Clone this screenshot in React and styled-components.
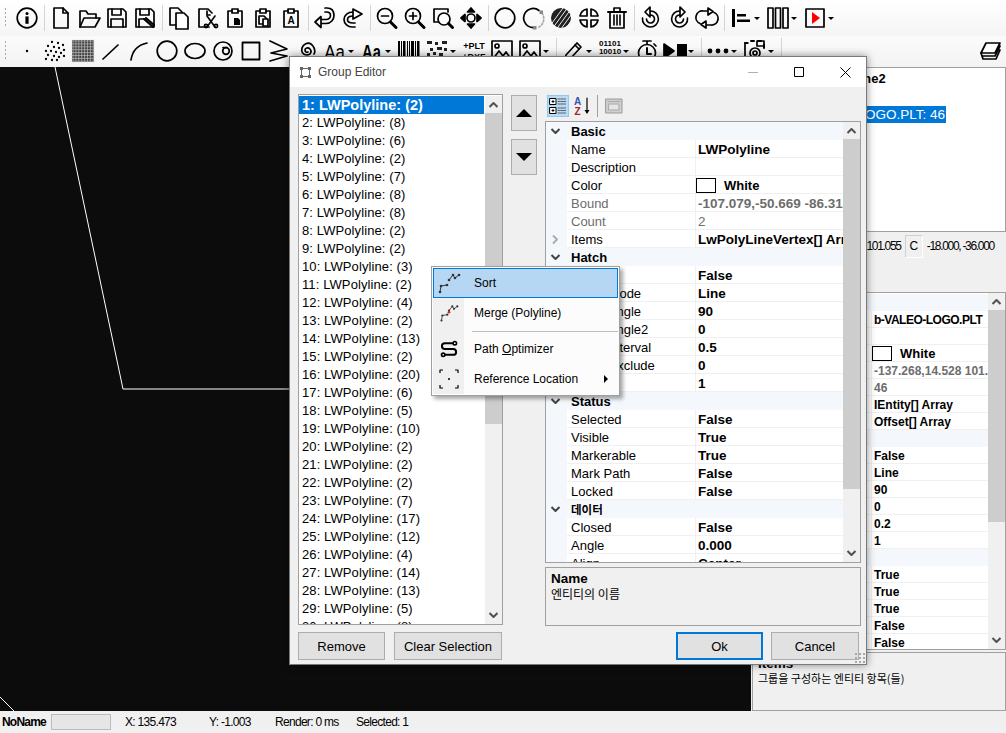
import React from "react";
import styled, { createGlobalStyle } from "styled-components";

const Global = createGlobalStyle`
  html, body { margin: 0; padding: 0; background: #f0f0f0; overflow: hidden; }
  body { font-family: "Liberation Sans", Arial, "Noto Sans CJK KR", sans-serif; font-size: 12px; color: #000; }
  * { box-sizing: border-box; }
`;

const Page = styled.div`
  position: relative; width: 1006px; height: 733px; display: flex; flex-direction: column; overflow: hidden; background: #f0f0f0;
`;
const Toolbar = styled.div`
  display: flex; align-items: center; flex: none; height: ${p => p.$h}px; padding-bottom: ${p => p.$pb || 0}px;
  background: linear-gradient(${p => p.$from}, ${p => p.$to});
`;
const Grip = styled.div`
  width: 13px; height: 20px; flex: none;
  background: radial-gradient(circle at 5.5px 1px, #a8a8a8 1px, transparent 1.1px) 0 0 / 13px 4px repeat-y;
`;
const Tool = styled.div`
  flex: none; width: ${p => (p.$drop ? 37 : 28)}px; height: 28px; display: flex; align-items: center; position: relative; padding-left: 2px;
`;
const Caret = styled.span`
  position: absolute; left: 27px; top: 13px; width: 0; height: 0;
  border-left: 3px solid transparent; border-right: 3px solid transparent; border-top: 3px solid #000;
`;
const Sep = styled.div`
  width: 6px; flex: none; height: 26px; display: flex; justify-content: center;
  &::before { content: ""; width: 1px; background: #d4d4d4; }
`;
const Spacer = styled.div`flex: 1;`;
const LayersWrap = styled.div`width: 28px; height: 26px; flex: none; display: flex; align-items: center;`;
const Glyph = styled.svg`
  display: block; flex: none; fill: none; stroke: #000; stroke-width: 1.7; stroke-linecap: round; stroke-linejoin: round;
  text { font-family: "Liberation Sans", Arial, sans-serif; stroke: none; fill: #000; }
`;

const Main = styled.div`display: flex; flex: 1; min-height: 0;`;
const Canvas = styled.div`flex: none; width: 751px; background: #0c0c0c;`;
const CanvasArt = styled.svg`display: block; width: 100%; height: 100%;`;
const Right = styled.div`flex: none; width: 255px; min-width: 0; display: flex; flex-direction: column; padding-left: 1px;`;
const TopPanel = styled.div`
  height: 165px; flex: none; background: #fff; border: 1px solid #a0a0a0; padding: 2px 0 0 90px; overflow: hidden;
`;
const TopTitle = styled.div`font-weight: bold; font-size: 13px; height: 18px; line-height: 18px; white-space: nowrap;`;
const TopSel = styled.div`
  margin-top: 18px; margin-left: -32px; display: inline-block; height: 17px; line-height: 17px; font-size: 13.5px; padding: 0 1px;
  background: #0078d7; color: #fff; white-space: nowrap; width: 135px; text-align: right;
`;
const CoordRow = styled.div`
  flex: none; height: 60px; display: flex; align-items: flex-start; padding: 3px 12px 0 0; justify-content: flex-end; gap: 4px;
`;
const CoordText = styled.span`line-height: 23px; letter-spacing: -1.3px; white-space: nowrap;`;
const CoordBtn = styled.span`
  width: 18px; height: 23px; flex: none; border: 1px solid #cfcfcf; border-right-color: #fff; border-bottom-color: #fff; text-align: center; line-height: 21px; font-size: 12px;
`;

const GridBox = styled.div`
  display: flex; flex: none; height: ${p => p.$h}px; background: #fff; border: 1px solid #a0a0a0; overflow: hidden;
`;
const Rows = styled.div`flex: 1; min-width: 0; overflow: hidden; padding-top: ${p => p.$pt || 0}px;`;
const CatRow = styled.div`
  display: flex; align-items: center; height: ${p => p.$r}px; background: #f4f7fc; font-weight: bold; font-size: 13px; white-space: nowrap;
`;
const CatName = styled.span`margin-left: 4px; font-size: ${p => (p.$ko ? 11.5 : 13)}px;`;
const Gutter = styled.span`
  width: ${p => p.$w}px; flex: none; display: flex; justify-content: center; align-items: center; height: 100%; background: #f4f7fc; padding-right: 3px;
`;
const PropRow = styled.div`display: flex; height: ${p => p.$r}px; line-height: ${p => p.$r + 1}px; white-space: nowrap;`;
const PropName = styled.span`
  width: ${p => p.$w}px; flex: none; overflow: hidden; border-bottom: 1px solid #f0f0f0; font-size: 13px; padding-left: 4px; color: ${p => (p.$dim ? "#6d6d6d" : "#000")};
`;
const PropValue = styled.span`
  flex: 1; min-width: 0; display: flex; align-items: center; overflow: hidden; border-bottom: 1px solid #f0f0f0; border-left: 1px solid #f0f0f0;
  padding: 2px 0 0 2px; font-weight: ${p => (p.$light ? "normal" : "bold")}; font-size: ${p => p.$fs}px; letter-spacing: ${p => (p.$tight ? -0.5 : 0)}px; color: ${p => (p.$dim ? "#6d6d6d" : "#000")};
`;
const Swatch = styled.i`
  width: 20px; height: 15px; flex: none; border: 1px solid #000; background: #fff; margin: -1px 8px 0 -2px;
`;
const ColorName = styled.span`font-size: 13px;`;

const Scroll = styled.div`width: 17px; flex: none; display: flex; flex-direction: column; background: #f0f0f0; align-self: stretch;`;
const ScrollArrow = styled.div`height: 17px; flex: none; display: flex; align-items: center; justify-content: center;`;
const Thumb = styled.div`flex: none; height: ${p => p.$h}px; background: #cdcdcd;`;
const ScrollRest = styled.div`flex: 1;`;

const HelpBox = styled.div`
  flex: none; height: 59px; margin-top: ${p => p.$mt || 0}px; border: 1px solid #a0a0a0; background: #f0f0f0; padding: 3px 0 0 5px; overflow: hidden;
`;
const HelpTitle = styled.div`font-weight: bold; font-size: 13.5px; line-height: 15px;`;
const HelpText = styled.div`font-size: ${p => p.$fs}px; line-height: 15px; font-family: "Noto Sans CJK KR", sans-serif;`;

const Status = styled.div`
  flex: none; height: 22px; display: flex; align-items: center; background: #f0f0f0; padding-left: 2px; letter-spacing: -0.7px; white-space: nowrap;
`;
const StatusName = styled.b`width: 49px; flex: none; letter-spacing: -0.8px;`;
const StatusBox = styled.span`width: 60px; height: 16px; flex: none; background: #e6e6e6; border: 1px solid #bcbcbc;`;
const StatusCell = styled.span`flex: none; width: ${p => p.$w}px; padding-left: ${p => p.$pl || 0}px;`;

const Dialog = styled.div`
  position: absolute; left: 289px; top: 56px; width: 578px; height: 609px; display: flex; flex-direction: column;
  background: #f0f0f0; border: 1px solid #7a7a7a; box-shadow: 0 0 8px rgba(0,0,0,.45);
`;
const TitleBar = styled.div`
  flex: none; height: 30px; background: #fff; display: flex; align-items: center; padding-left: 9px; gap: 6px;
`;
const TitleText = styled.span`color: #444; flex: 1; font-size: 12px;`;
const WinBtn = styled.div`width: 46px; height: 30px; flex: none; padding-left: 4px; display: flex; align-items: center; justify-content: center;`;
const TitleControls = styled.div`display: flex;`;
const DialogBody = styled.div`flex: none; display: flex; gap: 8px; height: 545px; padding: 7px 0 0 8px;`;
const ListBox = styled.div`
  width: 205px; height: 531px; flex: none; display: flex; background: #fff; border: 1px solid #a0a0a0; padding: 1px 0 0; overflow: hidden;
`;
const List = styled.div`flex: 1; overflow: hidden; margin-right: 1px;`;
const ListItem = styled.div`
  height: 18px; line-height: 18px; padding-left: 3px; white-space: nowrap; font-size: 13px; letter-spacing: 0.1px;
  ${p => p.$sel ? "background:#0078d7;color:#fff;font-weight:bold;font-size:14.5px;letter-spacing:0;" : ""}
`;
const Arrows = styled.div`width: 26px; flex: none; display: flex; flex-direction: column; gap: 8px; padding-top: 1px;`;
const ArrowBtn = styled.div`
  height: 36px; background: #e1e1e1; border: 1px solid #adadad; display: flex; align-items: center; justify-content: center;
`;
const Tri = styled.span`
  width: 0; height: 0; border-left: 8px solid transparent; border-right: 8px solid transparent;
  ${p => (p.$down ? "border-top: 8px solid #000;" : "border-bottom: 8px solid #000;")}
`;
const RightCol = styled.div`width: 316px; flex: none; display: flex; flex-direction: column; padding-top: 1px;`;
const GridTools = styled.div`height: 26px; flex: none; display: flex; align-items: flex-start; padding-left: 2px;`;
const GridToolBtn = styled.div`
  width: 22px; height: 22px; flex: none; display: flex; align-items: center; justify-content: center; margin-right: 2px; border: 1px solid ${p => (p.$on ? "#90c8f0" : "transparent")};
  background: ${p => (p.$on ? "#b8daf5" : "transparent")};
`;
const GridToolSep = styled.div`width: 1px; height: 22px; background: #a0a0a0; margin: 0 5px 0 2px; flex: none;`;
const Footer = styled.div`flex: 1; display: flex; align-items: flex-start; padding: 0 0 0 8px;`;
const Btn = styled.div`
  width: ${p => p.$w}px; height: 28px; flex: none; margin-right: ${p => p.$mr || 0}px; margin-left: ${p => p.$ml || 0}px; background: #e1e1e1;
  border: ${p => (p.$def ? "2px solid #0078d7" : "1px solid #adadad")}; display: flex; align-items: center; justify-content: center; font-size: 13px;
`;
const ResizeGrip = styled.div`
  position: absolute; right: 1px; bottom: 1px; width: 10px; height: 10px;
  background: radial-gradient(circle at 1px 1px, #a8a8a8 1px, transparent 1.1px) 0 0 / 4px 4px;
`;

const Menu = styled.div`
  position: absolute; left: 431px; top: 266px; width: 189px; height: 130px; background: #fcfcfc; border: 1px solid #a0a0a0; padding: 1px;
  box-shadow: 3px 3px 4px rgba(0,0,0,.35);
`;
const MenuRow = styled.div`
  display: flex; align-items: center; height: 30px; position: relative;
  ${p => p.$hot ? "background:#b5d7f3;outline:1px solid #0078d7;outline-offset:-1px;" : ""}
`;
const MenuIcon = styled.span`
  width: 31px; height: 100%; flex: none; display: flex; align-items: center; justify-content: center;
  background: ${p => (p.$hot ? "transparent" : "#f0f0f0")};
`;
const MenuLabel = styled.span`margin-left: 10px; font-size: 12px;`;
const MenuSep = styled.div`
  height: 6px; display: flex; align-items: center;
  background: linear-gradient(to right, #f0f0f0 31px, transparent 31px);
  &::after { content: ""; margin-left: 39px; flex: 1; height: 1px; background: #bcbcbc; }
`;
const SubArrow = styled.span`
  position: absolute; right: 10px; top: 11px; width: 0; height: 0;
  border-top: 4px solid transparent; border-bottom: 4px solid transparent; border-left: 4px solid #000;
`;
const KeyU = styled.span`text-decoration: underline;`;

const I = ({ s = 24, w, h, vb, children }) => (
  <Glyph width={w || s} height={h || s} viewBox={vb || "0 0 24 24"}>{children}</Glyph>
);

const range = (n, f) => Array.from({ length: n }, (_, i) => f(i));
const clip = <><path d="M5 5h4M15 5h4v16H5V5" /><path d="M9 3h6v4H9z" /></>;

const icons = {
  info: <><circle cx="12" cy="12" r="9.8" /><circle cx="12" cy="7.6" r="1.5" fill="#000" stroke="none" /><rect x="10.4" y="10.4" width="3.2" height="7.4" fill="#000" stroke="none" /></>,
  new: <><path d="M5 2h9l5 5v15H5z" /><path d="M14 2v5h5" /></>,
  open: <><path d="M3 21V5h6l2 3h8v4" /><path d="M3 21l4-9h16l-5 9z" /></>,
  save: <><path d="M3 3h15l3 3v15H3z" /><path d="M7 3v6h9V3" /><path d="M6 21v-8h12v8" /></>,
  saveas: <><path d="M3 3h15l3 3v15H3z" /><path d="M7 3v6h9V3" /><path d="M6 21v-8h7" /><path d="M11 13l9 8M13 12l8 7" strokeWidth="2" /></>,
  copy: <><path d="M3 2h8l4 4v13H3z" /><path d="M9 7h8l4 4v12H9z" fill="#fff" /></>,
  cut: <><path d="M17 7l-4-4H4v18h10" /><path d="M12 5v4h3" /><path d="M12 10l8 11M20 10l-8 11" strokeWidth="1.6" /><circle cx="11" cy="20" r="1.6" /><circle cx="21" cy="20" r="1.6" /></>,
  paste: <>{clip}<path d="M11 12h4l2 2v5h-6z" fill="#000" stroke="none" /></>,
  paste2: <>{clip}<path d="M8 10h5l2 2v6H8z" /><path d="M12 13h5v7h-5z" fill="#fff" /></>,
  pasteA: <>{clip}<text x="12" y="18" fontSize="10" fontWeight="bold" textAnchor="middle">A</text></>,
  undo: <><path d="M12 2h2c5 0 7 3.5 7 7.5s-3 8-8 8H8" /><path d="M12 6h1.5c3 0 4 1.8 4 3.5s-1.5 4-4.5 4H8" /><path d="M8 10.5L2 16l6 5.5z" fill="#fff" /></>,
  redo: <><path d="M12 6c-5 0-9 3-9 7.5S7 21 11 21h3M12 10c-3 0-5.5 1-5.5 3.5S9 17 12 17h2" /><path d="M12 3l9 5-9 5z" fill="#fff" /></>,
  zoomOut: <><circle cx="10" cy="10" r="7.5" /><path d="M6.5 10h7" /><path d="M15.5 16l5.5 5.5" strokeWidth="3" /></>,
  zoomIn: <><circle cx="10" cy="10" r="7.5" /><path d="M6.5 10h7M10 6.5v7" /><path d="M15.5 16l5.5 5.5" strokeWidth="3" /></>,
  zoomFit: <><path d="M3 3h14v3M3 3v13h4" /><circle cx="13" cy="13" r="6" fill="#fff" /><path d="M17.5 17.5l4 4" strokeWidth="3" /></>,
  pan: <><circle cx="12" cy="12" r="4" /><path d="M12 2l3.5 4h-7zM12 22l3.5-4h-7zM2 12l4-3.5v7zM22 12l-4-3.5v7z" fill="#000" /></>,
  circle: <circle cx="12" cy="12" r="9.8" />,
  dashedCircle: <><path d="M18 4.5A9.5 9.5 0 1 0 13 21.5" /><path d="M18 21A9.5 9.5 0 0 0 21.5 8" stroke="#aaa" strokeDasharray="1.5 2" /><rect x="18.5" y="4.5" width="3.5" height="3.5" fill="#888" stroke="none" /><rect x="12" y="20" width="3.5" height="3.5" fill="#888" stroke="none" /></>,
  hatch: <><circle cx="12" cy="12" r="10" fill="#222" stroke="none" />{range(7, i => <path key={i} d={`M${-2 + i * 4.4} 24L${14 + i * 4.4} 2`} stroke="#fff" strokeWidth="0.9" />)}</>,
  split: <path d="M10 3a9 9 0 0 0-7 7h7zM14 3a9 9 0 0 1 7 7h-7zM10 21a9 9 0 0 1-7-7h7zM14 21a9 9 0 0 0 7-7h-7z" />,
  trash: <><path d="M3 6h18" strokeWidth="2" /><path d="M9 5V2h6v3" /><path d="M5 6v16h14V6" /><path d="M9 9v10M12 9v10M15 9v10" strokeWidth="1.6" /></>,
  rotL: <><path d="M11 5a8 8 0 1 1-7.5 7M11 9a4 4 0 1 1-3.5 4" strokeWidth="1.6" /><path d="M11 1L6 6l5 5z" fill="#fff" /></>,
  rotR: <><path d="M13 5a8 8 0 1 0 7.5 7M13 9a4 4 0 1 0 3.5 4" strokeWidth="1.6" /><path d="M13 1l5 5-5 5z" fill="#fff" /></>,
  swap: <><path d="M14 5H8a6.5 6.5 0 0 0-3 12.5M10 19h6a6.5 6.5 0 0 0 3-12.5" /><path d="M13 2l5 3.5L13 9zM11 15l-5 3.5 5 3.5z" fill="#fff" /></>,
  align: <><rect x="3" y="3" width="3" height="18" fill="#000" stroke="none" /><rect x="8" y="8" width="9" height="2.5" fill="#000" stroke="none" /><rect x="8" y="13.5" width="13" height="2.5" fill="#000" stroke="none" /></>,
  columns: <><rect x="2" y="2" width="5" height="20" /><rect x="9.5" y="2" width="5" height="20" /><rect x="17" y="2" width="5" height="20" /></>,
  play: <><rect x="3" y="3" width="18" height="18" /><path d="M9 6l8 6-8 6z" fill="#f00" stroke="none" /></>,
  dot: <circle cx="12" cy="12" r="1.2" fill="#000" stroke="none" />,
  dots: <>{[[9, 3], [15, 4], [20, 6], [5, 7], [11, 8], [16, 9], [21, 11], [3, 12], [8, 12], [13, 13], [18, 14], [5, 16], [11, 17], [16, 18], [21, 17], [9, 21], [3, 20], [14, 21]].map(([x, y], i) => <circle key={i} cx={x} cy={y} r="1.15" fill="#000" stroke="none" />)}</>,
  fill: <><rect x="1" y="1" width="22" height="22" fill="#444" stroke="none" />{range(8, i => <path key={i} d={`M${2 + i * 2.9} 1v22M1 ${2 + i * 2.9}h22`} stroke="#bbb" strokeWidth="0.7" />)}</>,
  line: <path d="M4 20L19 6" />,
  arc: <path d="M4 21Q6 7 20 4" />,
  oval: <ellipse cx="12" cy="12" rx="10" ry="7.5" />,
  target: <><circle cx="12" cy="12" r="9" /><circle cx="15" cy="12" r="3.3" /><path d="M12 8.5h4" /></>,
  rect: <rect x="3.5" y="3.5" width="17" height="17" strokeWidth="1.8" />,
  zigzag: <path d="M3 2l17 8L4 14l16 3L3 22" />,
  spiral: <path d="M13 13c-1 1-3 0-3-2s3-3 5-1 1 6-3 6-6-3-5-7 6-6 9-4 5 7 3 10" />,
  aa: <text transform="translate(11.5 19.5) scale(.8 1)" fontSize="21" textAnchor="middle">Aa</text>,
  aaBold: <text transform="translate(11.5 19.5) scale(.7 1)" fontSize="21" fontWeight="bold" textAnchor="middle">Aa</text>,
  barcode: <>{[[1, 2], [4, 1], [6, 2.5], [10, 1], [12, 1], [14, 3], [18, 1], [20, 2.5]].map(([x, w], i) => <rect key={i} x={x} y="2" width={w} height="20" fill="#000" stroke="none" />)}</>,
  qr: <>{[[2, 2, 5], [10, 3, 3], [17, 2, 5], [5, 9, 3], [12, 8, 5], [19, 9, 3], [2, 14, 3], [8, 13, 3], [14, 14, 4], [5, 19, 3], [11, 18, 3], [17, 19, 5]].map(([x, y, w], i) => <rect key={i} x={x} y={y} width={w} height="3" fill="#222" stroke="none" />)}</>,
  plt: <><text x="12" y="10" fontSize="9" fontWeight="bold" textAnchor="middle">+PLT</text><text x="12" y="21" fontSize="9" fontWeight="bold" textAnchor="middle">+DXF</text></>,
  picture: <><rect x="2" y="2" width="20" height="20" /><circle cx="7" cy="7" r="2" /><path d="M3 20l6-8 4 5 3-4 5 7" /></>,
  pencil: <><path d="M5 16L16 4l4 4L9 20l-5 1z" /><path d="M14 6l4 4" /></>,
  binary: <><text x="12" y="7" fontSize="8" fontWeight="bold" textAnchor="middle">01101</text><text x="12" y="15" fontSize="8" fontWeight="bold" textAnchor="middle">10010</text><text x="12" y="23" fontSize="8" fontWeight="bold" textAnchor="middle">00110</text></>,
  timer: <><circle cx="12" cy="14" r="8.5" /><path d="M8 2h8M12 2v3M19 5l2 2" /><path d="M12 9v6h4" strokeWidth="2" /></>,
  playStop: <><path d="M1 5l10 7-10 7z" fill="#000" /><rect x="14" y="5" width="10" height="14" fill="#000" stroke="none" /></>,
  more: <><circle cx="4" cy="12" r="2.4" fill="#000" stroke="none" /><circle cx="12" cy="12" r="2.4" fill="#000" stroke="none" /><circle cx="20" cy="12" r="2.4" fill="#000" stroke="none" /></>,
  camera: <><path d="M5 4H2v18h18v-3" /><path d="M2 4h2M8 2h3M15 2h3M21 6v3" strokeWidth="2" /><circle cx="12" cy="14" r="5" /><circle cx="12" cy="14" r="2" /><rect x="14" y="2" width="7" height="5" /></>,
};

const row1 = [
  ["info"], "|", ["new"], ["open"], ["save"], ["saveas"], "|", ["copy"], ["cut"], ["paste"], ["paste2"], ["pasteA"], "|",
  ["undo"], ["redo"], "|", ["zoomOut"], ["zoomIn"], ["zoomFit"], ["pan"], "|", ["circle"], ["dashedCircle"], ["hatch"], ["split"], ["trash"], "|",
  ["rotL"], ["rotR"], ["swap"], "|", ["align", 1], ["columns", 1], ["play", 1],
];
const row2 = [
  ["dot"], ["dots"], ["fill"], ["line"], ["arc"], ["circle"], ["oval"], ["target"], ["rect"], ["zigzag"], ["spiral"], ["aa", 1], ["aaBold", 1],
  ["barcode"], ["qr", 1], ["plt"], ["picture"], ["picture", 1], "|", ["pencil", 1], ["binary", 1], ["timer"], ["playStop", 1], "|", ["more", 1], ["camera", 1], "|",
];

const Tools = ({ items }) => items.map((it, i) =>
  it === "|" ? <Sep key={i} /> : (
    <Tool key={i} $drop={!!it[1]}>
      <I>{icons[it[0]]}</I>
      {it[1] ? <Caret /> : null}
    </Tool>
  )
);

const Chevron = ({ dir = "down", color = "#444" }) => (
  <Glyph width="11" height="7" viewBox="0 0 11 7" style={{ stroke: color, strokeWidth: 2, strokeLinecap: "butt" }}>
    <path d={dir === "down" ? "M1.5 1l4 4 4-4" : "M1.5 6l4-4 4 4"} />
  </Glyph>
);
const SideChevron = () => (
  <Glyph width="7" height="11" viewBox="0 0 7 11" style={{ stroke: "#aaa", strokeWidth: 1.8, strokeLinecap: "butt" }}>
    <path d="M1 1.5l4 4-4 4" />
  </Glyph>
);

const ScrollBar = ({ thumb }) => (
  <Scroll>
    <ScrollArrow><Chevron dir="up" color="#505050" /></ScrollArrow>
    <Thumb $h={thumb} />
    <ScrollRest />
    <ScrollArrow><Chevron color="#505050" /></ScrollArrow>
  </Scroll>
);

const dialogRows = [
  { c: "Basic" },
  { n: "Name", v: "LWPolyline" },
  { n: "Description", v: "" },
  { n: "Color", v: "White", swatch: true },
  { n: "Bound", v: "-107.079,-50.669 -86.315,-24.008", dim: true },
  { n: "Count", v: "2", dim: true, light: true },
  { n: "Items", v: "LwPolyLineVertex[] Array", more: true },
  { c: "Hatch" },
  { n: "Hatch", v: "False" },
  { n: "Hatch Mode", v: "Line" },
  { n: "Hatch Angle", v: "90" },
  { n: "Hatch Angle2", v: "0" },
  { n: "Hatch Interval", v: "0.5" },
  { n: "Hatch Exclude", v: "0" },
  { n: "Repeat", v: "1" },
  { c: "Status" },
  { n: "Selected", v: "False" },
  { n: "Visible", v: "True" },
  { n: "Markerable", v: "True" },
  { n: "Mark Path", v: "False" },
  { n: "Locked", v: "False" },
  { c: "데이터", ko: true },
  { n: "Closed", v: "False" },
  { n: "Angle", v: "0.000" },
  { n: "Align", v: "Center" },
];
const sideRows = [
  { c: "Basic" },
  { n: "Name", v: "b-VALEO-LOGO.PLT", tight: true },
  { n: "Description", v: "" },
  { n: "Color", v: "White", swatch: true },
  { n: "Bound", v: "-137.268,14.528 101.055,35.900", dim: true },
  { n: "Count", v: "46", dim: true },
  { n: "Items", v: "IEntity[] Array" },
  { n: "Offsets", v: "Offset[] Array" },
  { c: "Hatch" },
  { n: "Hatch", v: "False" },
  { n: "Hatch Mode", v: "Line" },
  { n: "Hatch Angle", v: "90" },
  { n: "Hatch Angle2", v: "0" },
  { n: "Hatch Interval", v: "0.2" },
  { n: "Repeat", v: "1" },
  { c: "Status" },
  { n: "Selected", v: "True" },
  { n: "Visible", v: "True" },
  { n: "Markerable", v: "True" },
  { n: "Mark Path", v: "False" },
  { n: "Locked", v: "False" },
];

const PropRows = ({ rows, r, gutter, nameW, fs, pt }) => (
  <Rows $pt={pt}>
    {rows.map((row, i) =>
      row.c ? (
        <CatRow key={i} $r={r}>
          <Gutter $w={gutter}><Chevron /></Gutter>
          <CatName $ko={row.ko}>{row.c}</CatName>
        </CatRow>
      ) : (
        <PropRow key={i} $r={r}>
          <Gutter $w={gutter}>{row.more ? <SideChevron /> : null}</Gutter>
          <PropName $w={nameW} $dim={row.dim}>{row.n}</PropName>
          <PropValue $dim={row.dim} $fs={fs} $tight={row.tight} $light={row.light}>
            {row.swatch ? <Swatch /> : null}
            {row.swatch ? <ColorName>{row.v}</ColorName> : row.v}
          </PropValue>
        </PropRow>
      )
    )}
  </Rows>
);

const counts = [2, 8, 6, 2, 7, 8, 8, 2, 2, 3, 2, 4, 2, 13, 2, 20, 6, 5, 10, 2, 2, 2, 7, 17, 12, 4, 14, 13, 5, 8];

const SortIcon = ({ red, s = 24 }) => (
  <I s={s}>
    <path d="M3 21l1-6 6-1M12 9l4-5 2 3 4-3" strokeWidth="1" stroke="#333" />
    {[[3, 21], [4, 15], [10, 14], [12, 9], [16, 4], [18, 7], [22, 4]].map(([x, y], i) => <circle key={i} cx={x} cy={y} r="1.3" fill="#333" stroke="none" />)}
    {red ? <circle cx="12" cy="11" r="1.6" fill="#d22" stroke="none" /> : null}
  </I>
);

export default function App() {
  return (
    <Page>
      <Global />
      <Toolbar $h={36} $from="#ffffff" $to="#f5f5f5">
        <Grip />
        <Tools items={row1} />
      </Toolbar>
      <Toolbar $h={31} $pb={2} $from="#fbfbfb" $to="#f3f3f3">
        <Grip />
        <Tools items={row2} />
        <Spacer />
        <LayersWrap>
          <I>
            <path d="M8 4h14l-5 10H3z" fill="#fff" />
            <path d="M3 14l1 3h13l5-10M4 17l1 3h13l4-9" />
          </I>
        </LayersWrap>
      </Toolbar>
      <Main>
        <Canvas>
          <CanvasArt viewBox="0 0 751 644" preserveAspectRatio="none">
            <path d="M55 0L123 322H320M0 630L14 644" fill="none" stroke="#fff" strokeWidth="1" />
          </CanvasArt>
        </Canvas>
        <Right>
          <TopPanel>
            <TopTitle>Name2</TopTitle>
            <TopSel>LOGO.PLT: 46</TopSel>
          </TopPanel>
          <CoordRow>
            <CoordText>101.055</CoordText>
            <CoordBtn>C</CoordBtn>
            <CoordText>-18.000, -36.000</CoordText>
          </CoordRow>
          <GridBox $h={358}>
            <PropRows rows={sideRows} r={17} gutter={21} nameW={97} fs={12} pt={1} />
            <ScrollBar thumb={212} />
          </GridBox>
          <Spacer />
          <HelpBox>
            <HelpTitle>Items</HelpTitle>
            <HelpText $fs={11}>그룹을 구성하는 엔티티 항목(들)</HelpText>
          </HelpBox>
        </Right>
      </Main>
      <Status>
        <StatusName>NoName</StatusName>
        <StatusBox />
        <StatusCell $w={98} $pl={14}>X: 135.473</StatusCell>
        <StatusCell $w={66}>Y: -1.003</StatusCell>
        <StatusCell $w={81}>Render: 0 ms</StatusCell>
        <StatusCell $w={60}>Selected: 1</StatusCell>
      </Status>

      <Dialog>
        <TitleBar>
          <I s={13} vb="0 0 13 13">
            <rect x="1" y="1" width="3" height="3" fill="#666" stroke="none" />
            <rect x="9" y="1" width="3" height="3" fill="#666" stroke="none" />
            <rect x="1" y="9" width="3" height="3" fill="#666" stroke="none" />
            <rect x="9" y="9" width="3" height="3" fill="#666" stroke="none" />
            <path d="M4 2.5h5M2.5 4v5M10.5 4v5M4 10.5h5" strokeWidth="1" stroke="#666" />
          </I>
          <TitleText>Group Editor</TitleText>
          <TitleControls>
            <WinBtn><Glyph width="10" height="10" viewBox="0 0 10 10" style={{ strokeWidth: 1, stroke: "#b0b0b0" }}><path d="M0 5.5h10" /></Glyph></WinBtn>
            <WinBtn><Glyph width="10" height="10" viewBox="0 0 10 10" style={{ strokeWidth: 1, strokeLinecap: "butt" }}><rect x="0.5" y="0.5" width="9" height="9" /></Glyph></WinBtn>
            <WinBtn><Glyph width="11" height="11" viewBox="0 0 11 11" style={{ strokeWidth: 1, strokeLinecap: "butt" }}><path d="M0.5 0.5l10 10M10.5 0.5l-10 10" /></Glyph></WinBtn>
          </TitleControls>
        </TitleBar>
        <DialogBody>
          <ListBox>
            <List>
              {counts.map((c, i) => (
                <ListItem key={i} $sel={i === 0}>{i + 1}: LWPolyline: ({c})</ListItem>
              ))}
            </List>
            <ScrollBar thumb={311} />
          </ListBox>
          <Arrows>
            <ArrowBtn><Tri /></ArrowBtn>
            <ArrowBtn><Tri $down /></ArrowBtn>
          </Arrows>
          <RightCol>
            <GridTools>
              <GridToolBtn $on>
                <I s={18} vb="0 0 18 18">
                  <rect x="1" y="1.5" width="6" height="6" strokeWidth="1" fill="#fff" />
                  <rect x="1" y="10.5" width="6" height="6" strokeWidth="1" fill="#fff" />
                  <path d="M3 4.5h2M4 3.5v2M3 13.5h2M4 12.5v2" strokeWidth="1" />
                  <path d="M9 2h8M9 4.5h8M9 7h8M9 11h8M9 13.5h8M9 16h8" strokeWidth="0.9" stroke="#555" strokeDasharray="2 0.8" />
                </I>
              </GridToolBtn>
              <GridToolBtn>
                <I s={20} vb="0 0 20 20">
                  <text x="5.5" y="9" fontSize="10" fontWeight="bold" textAnchor="middle" style={{ fill: "#3456b0" }}>A</text>
                  <text x="5.5" y="19" fontSize="10" fontWeight="bold" textAnchor="middle" style={{ fill: "#a02a2a" }}>Z</text>
                  <path d="M15 2v14" strokeWidth="1.2" />
                  <path d="M12.5 14h5l-2.5 4z" fill="#000" stroke="none" />
                </I>
              </GridToolBtn>
              <GridToolSep />
              <I s={22} vb="0 0 22 22">
                <rect x="3" y="4" width="16" height="14" fill="#cfcfcf" stroke="#999" strokeWidth="1" />
                <rect x="6" y="9" width="10" height="6" fill="#e6e6e6" stroke="#a8a8a8" strokeWidth="1" />
                <path d="M5 6.5h12" stroke="#aaa" strokeWidth="1" />
              </I>
            </GridTools>
            <GridBox $h={442}>
              <PropRows rows={dialogRows} r={18} gutter={21} nameW={128} fs={13.5} />
              <ScrollBar thumb={350} />
            </GridBox>
            <HelpBox $mt={4}>
              <HelpTitle>Name</HelpTitle>
              <HelpText $fs={12}>엔티티의 이름</HelpText>
            </HelpBox>
          </RightCol>
        </DialogBody>
        <Footer>
          <Btn $w={87} $mr={9}>Remove</Btn>
          <Btn $w={108}>Clear Selection</Btn>
          <Btn $w={87} $ml={174} $def>Ok</Btn>
          <Btn $w={88} $ml={8}>Cancel</Btn>
        </Footer>
        <ResizeGrip />
      </Dialog>

      <Menu>
        <MenuRow $hot>
          <MenuIcon $hot><SortIcon /></MenuIcon>
          <MenuLabel>Sort</MenuLabel>
        </MenuRow>
        <MenuRow>
          <MenuIcon><SortIcon red s={20} /></MenuIcon>
          <MenuLabel>Merge (Polyline)</MenuLabel>
        </MenuRow>
        <MenuSep />
        <MenuRow>
          <MenuIcon>
            <I s={20}>
              <path d="M7 5h11M7 5a3 3 0 0 0 0 7h10a3 3 0 0 1 0 7H6" strokeWidth="2.4" />
              <circle cx="19" cy="5" r="2" fill="#fff" strokeWidth="2" />
              <circle cx="5" cy="19" r="2" fill="#fff" strokeWidth="2" />
            </I>
          </MenuIcon>
          <MenuLabel>Path <KeyU>O</KeyU>ptimizer</MenuLabel>
        </MenuRow>
        <MenuRow>
          <MenuIcon>
            <I s={22} vb="0 0 22 22">
              <path d="M2 5V2h3M17 2h3v3M20 17v3h-3M5 20H2v-3" strokeWidth="1.2" strokeLinecap="butt" />
              <path d="M10 11h2M11 10v2" strokeWidth="1" strokeLinecap="butt" />
            </I>
          </MenuIcon>
          <MenuLabel>Reference Location</MenuLabel>
          <SubArrow />
        </MenuRow>
      </Menu>
    </Page>
  );
}
